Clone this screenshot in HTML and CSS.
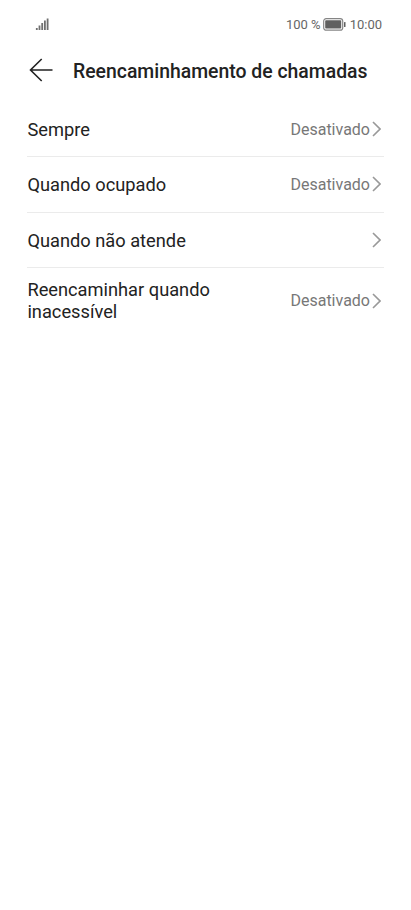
FILE: index.html
```
<!DOCTYPE html>
<html lang="pt">
<head>
  <meta charset="UTF-8">
  <meta name="viewport" content="width=device-width, initial-scale=1.0">
  <title>Reencaminhamento de chamadas</title>
  <link rel="stylesheet" href="styles.css">
</head>
<body>

  <!-- Status bar -->
  <div class="status-bar">
    <svg class="signal" width="14" height="13" viewBox="0 0 14 13">
      <path d="M1.800 10v2M4.500 7.500v4.500M7.200 5v7M9.900 2.500v9.500M12.600 0.500v11.500" />
    </svg>
    <div class="status-right">
      <span>100 %</span>
      <svg class="battery" width="23" height="13" viewBox="0 0 23 13">
        <rect class="shell" x="0.700" y="0.700" width="19" height="11.500" rx="2.500" />
        <rect class="level" x="2.200" y="2.300" width="16" height="8.300" rx="0.800" />
        <rect class="level" x="21" y="4" width="1.500" height="5" rx="0.500" />
      </svg>
      <span>10:00</span>
    </div>
  </div>

  <!-- Header -->
  <header>
    <button class="back" aria-label="Voltar">
      <svg width="24" height="24" viewBox="0 0 24 24">
        <path d="M23.500 12H1.500M12.700 1L1.500 12L12.700 23" />
      </svg>
    </button>
    <h1>Reencaminhamento de chamadas</h1>
  </header>

  <!-- Forwarding options -->
  <ul class="options">
    <li>
      <span class="label">Sempre</span>
      <span class="value">Desativado</span>
      <svg class="chevron" width="9" height="16" viewBox="0 0 9 16"><path d="M1 1l7 7l-7 7" /></svg>
    </li>
    <li>
      <span class="label">Quando ocupado</span>
      <span class="value">Desativado</span>
      <svg class="chevron" width="9" height="16" viewBox="0 0 9 16"><path d="M1 1l7 7l-7 7" /></svg>
    </li>
    <li>
      <span class="label">Quando não atende</span>
      <svg class="chevron" width="9" height="16" viewBox="0 0 9 16"><path d="M1 1l7 7l-7 7" /></svg>
    </li>
    <li class="tall">
      <span class="label">Reencaminhar quando inacessível</span>
      <span class="value">Desativado</span>
      <svg class="chevron" width="9" height="16" viewBox="0 0 9 16"><path d="M1 1l7 7l-7 7" /></svg>
    </li>
  </ul>

</body>
</html>
```

FILE: styles.css
```
* {
  box-sizing: border-box;
}

body {
  margin: 0;
  min-height: 100vh;
  font-family: Roboto, sans-serif;
  background: #fff;
  color: #222;
}

svg {
  display: block;
  flex: none;
  fill: none;
}

.status-bar {
  display: flex;
  align-items: center;
  justify-content: space-between;
  height: 40px;
  padding: 9px 29px 0 35px;
  font-size: 13px;
  color: #666;
}

.signal {
  stroke: #707070;
  stroke-width: 1.8;
}

.status-right {
  display: flex;
  align-items: center;
  gap: 2.5px;
}

.status-right span:last-child {
  margin-left: 1px;
}

.battery .shell {
  stroke: #858585;
  stroke-width: 1.2;
}

.battery .level {
  fill: #606060;
}

header {
  display: flex;
  align-items: center;
  height: 62px;
  padding-left: 29px;
}

.back {
  padding: 0;
  margin-bottom: 3px;
  border: none;
  background: none;
}

.back svg {
  stroke: #222;
  stroke-width: 1.6;
}

h1 {
  margin: 1px 0 0 20px;
  font-size: 19.4px;
  font-weight: 500;
  line-height: 23px;
  white-space: nowrap;
}

.options {
  margin: 0;
  padding: 0 27px;
  list-style: none;
}

.options li {
  display: flex;
  align-items: center;
  height: 55.3px;
  padding-right: 3px;
  border-bottom: 1px solid #ebebeb;
}

.options li.tall {
  height: 65.5px;
  border-bottom: none;
}

.label {
  width: 200px;
  margin-right: auto;
  padding-left: 0.4px;
  font-size: 18.25px;
  line-height: 22px;
}

.value {
  margin-right: 2px;
  font-size: 16px;
  line-height: 20px;
  color: #777;
}

/* single-line labels sit a little below the chevron's centre */
.options li:not(.tall) .label {
  padding-top: 2px;
}

.options li:not(.tall) .value {
  padding-top: 1px;
}

.chevron {
  stroke: #999;
  stroke-width: 1.6;
}
```
